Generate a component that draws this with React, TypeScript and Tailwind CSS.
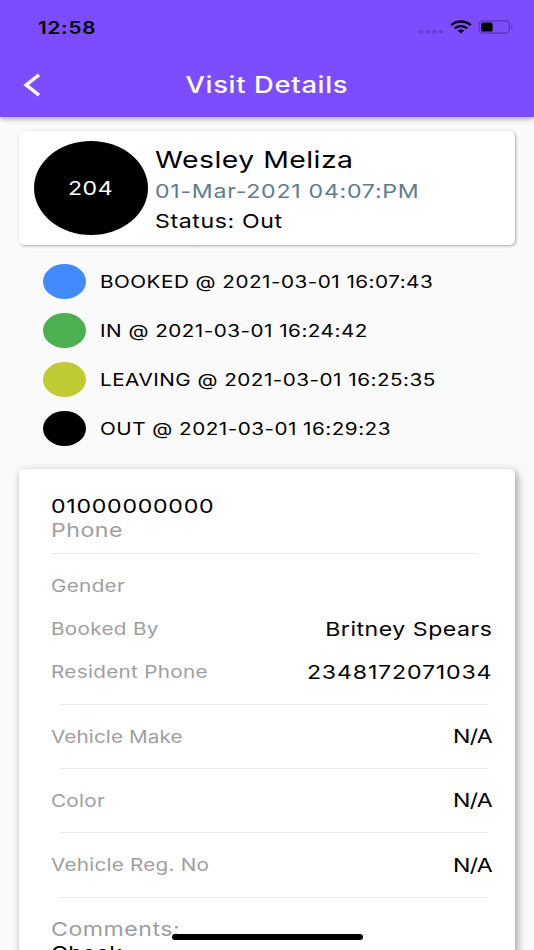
import clsx from "clsx";
import type { ReactNode } from "react";

type TextProps = {
    children: ReactNode;
    className?: string;
}

type RowProps = {
    label: string;
    value: string;
    labelClass?: string;
    valueClass?: string;
}

const timeline = [
    { label: "BOOKED @ 2021-03-01 16:07:43", color: "bg-[#448aff]" },
    { label: "IN @ 2021-03-01 16:24:42", color: "bg-[#4caf50]" },
    { label: "LEAVING @ 2021-03-01 16:25:35", color: "bg-[#c0ca33]" },
    { label: "OUT @ 2021-03-01 16:29:23", color: "bg-black" },
]

const resident: RowProps[] = [
    { label: "Gender", value: "" },
    { label: "Booked By", value: "Britney Spears", valueClass: "tracking-[0.42px]" },
    { label: "Resident Phone", value: "2348172071034", valueClass: "tracking-[0.68px]" },
]

const vehicle: RowProps[] = [
    { label: "Vehicle Make", value: "N/A", labelClass: "tracking-[0.08px]", valueClass: "tracking-[-0.6px]" },
    { label: "Color", value: "N/A", labelClass: "tracking-[0.2px]", valueClass: "tracking-[-0.6px]" },
    { label: "Vehicle Reg. No", value: "N/A", labelClass: "tracking-[0.18px]", valueClass: "tracking-[-0.6px]" },
]

// wide lettering used all over the screen
const Text = ({ children, className }: TextProps) => (
    <span className={clsx("block w-max whitespace-nowrap scale-x-[1.217]", className ?? "origin-left")}>
        {children}
    </span>
)

const Row = ({ label, value, labelClass = "tracking-[0.25px]", valueClass }: RowProps) => (
    <div className="flex h-[43.3px] items-center justify-between pt-[2px]">
        <Text className={clsx("origin-left text-[17px] text-[#9e9e9e]", labelClass)}>{label}</Text>
        <Text className={clsx("origin-right text-[19px]", valueClass)}>{value}</Text>
    </div>
)

const StatusBar = () => (
    <div className="flex h-[54px] items-center justify-between pl-[38px] pr-[20px]">
        <Text className="origin-left pt-[3px] text-[17px] font-semibold tracking-[0.6px]">12:58</Text>
        <div className="flex items-center">
            <svg width="26" height="14" viewBox="0 0 26 14" className="text-[#6440ca]" fill="currentColor">
                <ellipse cx="2.9" cy="11.8" rx="2.3" ry="1.9" />
                <ellipse cx="9.6" cy="11.8" rx="2.3" ry="1.9" />
                <ellipse cx="16.3" cy="11.8" rx="2.3" ry="1.9" />
                <ellipse cx="23" cy="11.8" rx="2.3" ry="1.9" />
            </svg>
            <svg width="22" height="14" viewBox="0 0 22 14" className="ml-[6px]" fill="none" stroke="black">
                <path d="M1.2 5.1C6.6 .3 15.4 .3 20.8 5.1" strokeWidth="2.5" />
                <path d="M4.7 8.4C8.3 5.4 13.7 5.4 17.3 8.4" strokeWidth="2.3" />
                <path d="M7.7 10.6C9.6 9.1 12.4 9.1 14.3 10.6L11 13.5Z" fill="black" stroke="none" />
            </svg>
            <svg width="36" height="14" viewBox="0 0 36 14" className="ml-[6.5px]" fill="none">
                <rect x="1.2" y=".9" width="30" height="12.2" rx="3.4" stroke="#5535aa" strokeWidth="1.1" />
                <rect x="3.2" y="2.5" width="11.4" height="9" rx="1.6" fill="black" />
                <path d="M33.2 4.8C35.1 5.5 35.1 8.5 33.2 9.2Z" fill="#5535aa" />
            </svg>
        </div>
    </div>
)

const App = () => {
    return (
        <div className="relative flex h-[950px] w-[534px] flex-col overflow-hidden bg-[#fafafa] font-['Inter',sans-serif] text-black">
            {/* header */}
            <header className="h-[117px] shrink-0 bg-[#7c4dff] shadow-[0_2px_5px_rgba(0,0,0,0.32)]">
                <StatusBar />
                <div className="grid h-[61px] grid-cols-[1fr_auto_1fr] items-center">
                    <svg width="20" height="26" viewBox="0 0 20 26" className="ml-[21px]" fill="none" stroke="white" strokeWidth="3.4">
                        <path d="M18 2.8L5.2 13L18 23.2" />
                    </svg>
                    <Text className="origin-center text-[22.5px] font-medium text-white tracking-[0.55px]">Visit Details</Text>
                </div>
            </header>

            {/* visitor */}
            <section className="mx-[19px] mt-[14px] flex h-[114px] shrink-0 items-center rounded-[5px] bg-white pl-[14.5px] shadow-[1px_1px_3px_rgba(0,0,0,0.32)]">
                <div className="flex h-[94px] w-[114px] items-center justify-center rounded-[50%] bg-black text-white">
                    <Text className="origin-center pt-[2px] text-[19px] tracking-[0.4px]">204</Text>
                </div>
                <div className="ml-[7px] flex flex-col pt-[3px]">
                    <Text className="origin-left text-[23.3px] leading-[34px] tracking-[0.4px]">Wesley Meliza</Text>
                    <Text className="origin-left text-[19px] leading-[30px] text-[#607d8b] tracking-[0.6px]">01-Mar-2021 04:07:PM</Text>
                    <Text className="origin-left text-[19px] leading-[29px] tracking-[0.5px]">Status: Out</Text>
                </div>
            </section>

            {/* timeline */}
            <ul className="mt-[12px] shrink-0 pl-[43px]">
                {timeline.map((item) => (
                    <li key={item.label} className="flex h-[49.1px] items-center gap-[14px]">
                        <span className={clsx("h-[35px] w-[43px] rounded-[50%]", item.color)} />
                        <Text className="origin-left pt-[2px] text-[17px] tracking-[0.39px]">{item.label}</Text>
                    </li>
                ))}
            </ul>

            {/* details */}
            <section className="mx-[19px] mt-[15.3px] h-[520px] shrink-0 rounded-[5px] bg-white pl-[32px] pr-[23px] pt-[26px] shadow-[2px_3px_8px_rgba(0,0,0,0.4)]">
                <Text className="origin-left text-[19px] leading-[24px] tracking-[0.6px]">01000000000</Text>
                <Text className="origin-left text-[19px] leading-[24px] text-[#9e9e9e] tracking-[0.4px]">Phone</Text>
                <div className="mr-[14px] mt-[10px] h-px bg-[#e9e9e9]" />
                <div className="mt-[10.2px]">
                    {resident.map((item) => <Row key={item.label} {...item} />)}
                </div>
                {vehicle.map((item) => (
                    <div key={item.label}>
                        <div className="ml-[9px] mr-[4px] mt-[10px] h-px bg-[#ebebeb]" />
                        <div className="mt-[10px]"><Row {...item} /></div>
                    </div>
                ))}
                <div className="ml-[9px] mr-[4px] mt-[10px] h-px bg-[#ebebeb]" />
                <div className="mt-[20.5px]">
                    <Text className="origin-left text-[19px] leading-[24px] text-[#9e9e9e] tracking-[0.42px]">Comments:</Text>
                    <Text className="origin-left text-[19px] leading-[24px] tracking-[0.2px]">Check</Text>
                </div>
            </section>

            {/* home indicator */}
            <div className="absolute left-[172px] top-[934px] h-[6px] w-[191px] rounded-full bg-black" />
        </div>
    );
}

export default App;
